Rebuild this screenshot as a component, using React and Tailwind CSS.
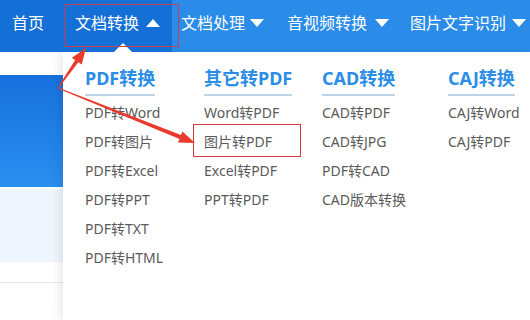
import React from 'react';

const columns = [
  { title: 'PDF转换', width: 'w-[119px]', items: ['PDF转Word', 'PDF转图片', 'PDF转Excel', 'PDF转PPT', 'PDF转TXT', 'PDF转HTML'] },
  { title: '其它转PDF', width: 'w-[118px]', items: ['Word转PDF', '图片转PDF', 'Excel转PDF', 'PPT转PDF'] },
  { title: 'CAD转换', width: 'w-[126px]', items: ['CAD转PDF', 'CAD转JPG', 'PDF转CAD', 'CAD版本转换'] },
  { title: 'CAJ转换', width: 'w-[80px]', items: ['CAJ转Word', 'CAJ转PDF'] },
];

const Caret = ({ up }) => (
  <svg width="14" height="8" viewBox="0 0 14 8" className="shrink-0">
    <path d={up ? 'M0 8 L7 0 L14 8 Z' : 'M0 0 L14 0 L7 8 Z'} fill="#fff" />
  </svg>
);

const App = () => {
  return (
    <div
      className="relative w-[530px] h-[320px] overflow-hidden bg-white"
      style={{ fontFamily: '"Noto Sans", "Noto Sans CJK SC", sans-serif' }}
    >
      {/* Top nav */}
      <div className="flex h-[52px] bg-[#2a8ce8] text-white text-[16px] leading-none">
        <div className="relative flex w-[172px] items-center pb-[6px] bg-[#1470d6]">
          <span className="ml-[12px]">首页</span>
          <div className="ml-[31px] flex items-center gap-[7px]">
            <span>文档转换</span>
            <Caret up />
          </div>
          {/* pointer to dropdown */}
          <svg width="18" height="9" viewBox="0 0 18 9" className="absolute left-[114px] bottom-0">
            <path d="M0 9 L9 0 L18 9 Z" fill="#fff" />
          </svg>
        </div>
        <div className="ml-[9px] flex items-center gap-[5px] pb-[6px]">
          <span>文档处理</span>
          <Caret />
        </div>
        <div className="ml-[23px] flex items-center gap-[8px] pb-[6px]">
          <span>音视频转换</span>
          <Caret />
        </div>
        <div className="ml-[21px] flex items-center gap-[6px] pb-[6px]">
          <span>图片文字识别</span>
          <Caret />
        </div>
      </div>

      <div className="flex h-[268px]">
        {/* Page behind the menu */}
        <div className="flex w-[63px] flex-col">
          <div className="h-[23px] bg-white" />
          <div className="h-[112px] bg-gradient-to-b from-[#1870dc] to-[#2a8ef0]" />
          <div className="mt-[2px] h-[73px] bg-[#eef5fd]" />
          <div className="h-[21px] border-b border-[#e3e6ea] bg-white" />
        </div>

        {/* Dropdown panel */}
        <div className="flex flex-1 bg-white pl-[22px] pt-[14px] shadow-[-4px_0_8px_rgba(0,0,0,0.08)]">
          {columns.map((col) => (
            <div key={col.title} className={`${col.width} shrink-0`}>
              <div className="inline-block border-b-2 border-[#bcd3ea] pb-[4px] text-[18px] font-bold leading-[24px] text-[#2b8de6]">
                {col.title}
              </div>
              <ul className="mt-[2px]">
                {col.items.map((item) => (
                  <li key={item} className="h-[29px] text-[14px] leading-[29px] text-[#5a5a5a]">
                    {item}
                  </li>
                ))}
              </ul>
            </div>
          ))}
        </div>
      </div>

      {/* Annotation boxes */}
      <div className="absolute left-[65px] top-[4px] h-[43px] w-[114px] border border-[#c8404c]" />
      <div className="absolute left-[193px] top-[124px] h-[33px] w-[108px] border border-[#d9363e]" />

      {/* Annotation arrows (tapered shafts) */}
      <svg className="pointer-events-none absolute left-0 top-0" width="530" height="320">
        <g fill="#ea3a2e">
          <path d="M58.4 88.3 L78.4 62.2 L81.7 64.5 L86 48 L71.9 57.7 L75.2 60 L57.6 87.7 Z" />
          <path d="M57.8 88.5 L179.5 138.9 L177.9 142.6 L195 143 L182.4 131.5 L180.9 135.1 L58.2 87.5 Z" />
        </g>
      </svg>
    </div>
  );
};

export default App;
